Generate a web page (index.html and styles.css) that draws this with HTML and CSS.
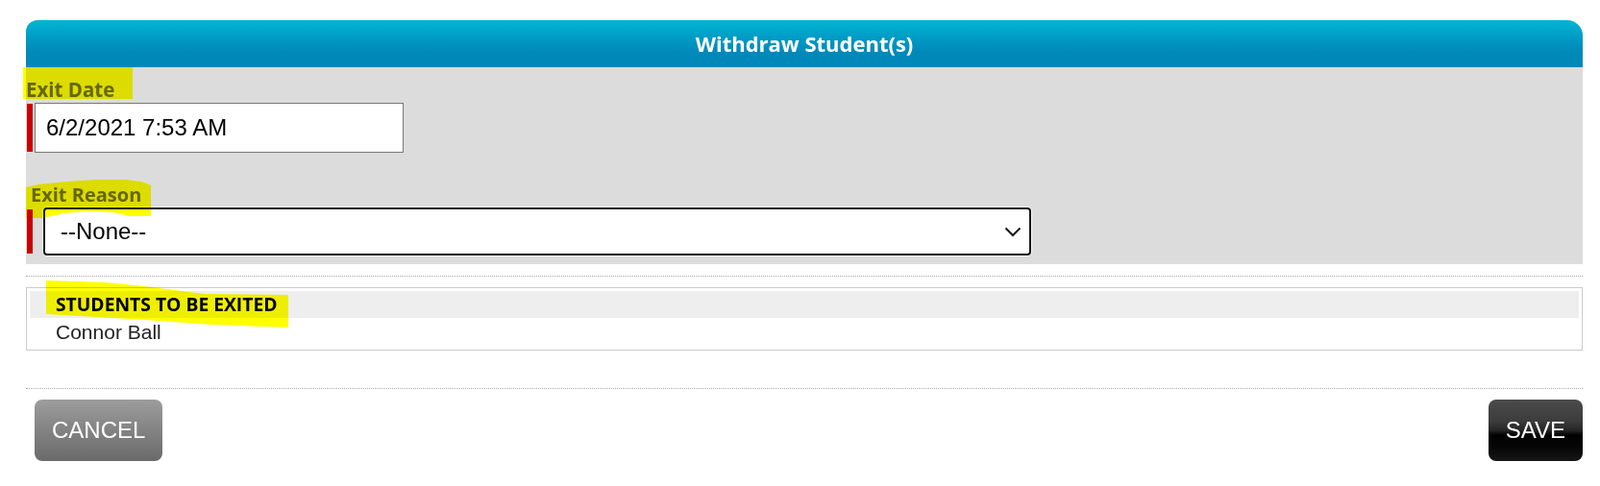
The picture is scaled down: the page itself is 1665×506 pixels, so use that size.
FILE: index.html
```html
<!DOCTYPE html>
<html lang="en">
<head>
<meta charset="utf-8">
<title>Withdraw Student(s)</title>
<link rel="stylesheet" href="styles.css">
</head>
<body>
<div class="page">
  <div class="panel">
    <div class="panel-header">Withdraw Student(s)</div>
    <div class="panel-body">
      <div class="field-label">Exit Date</div>
      <div class="field-row">
        <span class="req-bar"></span>
        <input class="text-input" type="text" value="6/2/2021 7:53 AM">
      </div>
      <div class="field-label field-label-reason">Exit Reason</div>
      <div class="field-row field-row-select">
        <span class="req-bar req-bar-select"></span>
        <div class="select-box">
          <span class="select-value">--None--</span>
          <svg class="chevron" width="18" height="11" viewBox="0 0 18 11" aria-hidden="true">
            <polyline points="1.5,1.5 9,9 16.5,1.5" fill="none" stroke="#1a1a1a" stroke-width="2"/>
          </svg>
        </div>
      </div>
    </div>
    <div class="divider"></div>
    <div class="students-box">
      <div class="students-head">STUDENTS TO BE EXITED</div>
      <div class="students-item">Connor Ball</div>
    </div>
    <div class="divider divider-bottom"></div>
    <div class="actions">
      <button class="btn btn-cancel" type="button">CANCEL</button>
      <button class="btn btn-save" type="button">SAVE</button>
    </div>
  </div>
  <div class="hl hl-date"></div>
  <div class="hl hl-reason"></div>
  <div class="hl hl-students"></div>
</div>
</body>
</html>
```

FILE: styles.css
```css
html, body {
  margin: 0;
  padding: 0;
  background: #ffffff;
}

.page {
  position: relative;
  padding: 21px 18px 0 27px;
  font-family: "Liberation Sans", Arial, sans-serif;
}

.panel {
  width: 1620px;
}

.panel-header {
  height: 49px;
  line-height: 49px;
  text-align: center;
  color: #ffffff;
  font-family: "Open Sans", "Noto Sans", sans-serif;
  font-weight: 700;
  font-size: 22px;
  border-radius: 12px 16px 0 0;
  background: linear-gradient(to bottom, #00b6d2 0%, #0099c4 40%, #0088b9 70%, #0088b9 100%);
}

.panel-body {
  background: #dcdcdc;
  padding: 10px 0 9px 0;
}

.field-label {
  height: 27px;
  line-height: 27px;
  font-family: "Open Sans", "Noto Sans", sans-serif;
  font-weight: 700;
  font-size: 20.5px;
  color: #666666;
  padding-left: 0;
}

.field-label-reason {
  margin-top: 31px;
  height: 26px;
  line-height: 26px;
  padding-left: 5px;
  font-size: 20px;
}

.field-row {
  display: flex;
  align-items: center;
  height: 52px;
}

.req-bar {
  display: block;
  width: 6px;
  height: 50px;
  margin-left: 1px;
  margin-right: 2px;
  background: #cc0000;
}

.text-input {
  box-sizing: border-box;
  width: 384px;
  height: 52px;
  margin: 0;
  padding: 0 11px;
  border: 1px solid #777777;
  border-radius: 0;
  background: #ffffff;
  font-family: "Liberation Sans", Arial, sans-serif;
  font-size: 24px;
  color: #000000;
  outline: none;
}

.field-row-select {
  height: 50px;
}

.req-bar-select {
  height: 46px;
  margin-right: 11px;
}

.select-box {
  box-sizing: border-box;
  width: 1028px;
  height: 50px;
  border: 2px solid #141414;
  border-radius: 4px;
  background: #ffffff;
  box-shadow: 0 0 0 1px rgba(255, 255, 255, 0.7);
  display: flex;
  align-items: center;
  justify-content: space-between;
  padding: 0 8px 0 16px;
  font-family: "Liberation Sans", Arial, sans-serif;
  font-size: 24px;
  color: #000000;
}

.chevron {
  display: block;
}

.divider {
  margin-top: 12px;
  border-top: 1px dotted #a8a8a8;
}

.students-box {
  margin-top: 11px;
  border: 1px solid #cccccc;
  padding: 3px;
}

.students-head {
  height: 28px;
  line-height: 28px;
  padding-left: 27px;
  background: #eeeeee;
  font-family: "Open Sans", "Noto Sans", sans-serif;
  font-weight: 700;
  font-size: 19.3px;
  color: #000000;
}

.students-item {
  height: 30px;
  line-height: 30px;
  padding-left: 27px;
  font-family: "Liberation Sans", Arial, sans-serif;
  font-size: 21px;
  color: #222222;
}

.divider-bottom {
  margin-top: 39px;
}

.actions {
  margin-top: 11px;
  padding-left: 9px;
  display: flex;
  justify-content: space-between;
  align-items: flex-start;
}

.btn {
  height: 64px;
  padding: 0 18px;
  border: none;
  border-radius: 8px;
  color: #ffffff;
  font-family: "Liberation Sans", Arial, sans-serif;
  font-size: 24px;
  cursor: pointer;
}

.btn-cancel {
  background: linear-gradient(to bottom, #9d9d9d 0%, #838383 50%, #6a6a6a 100%);
}

.btn-save {
  background: linear-gradient(to bottom, #4b4b4b 0%, #3c3c3c 35%, #262626 50%, #000000 58%, #080808 80%, #161616 100%);
}

/* Highlighter marks drawn over the form */
.hl {
  position: absolute;
  background: #ffff00;
  mix-blend-mode: multiply;
  pointer-events: none;
}

.hl-date {
  left: 24px;
  top: 70px;
  width: 114px;
  height: 33px;
}

.hl-reason {
  left: 27px;
  top: 186px;
  width: 131px;
  height: 42px;
  clip-path: polygon(0px 9px, 13px 6px, 43px 3px, 73px 1px, 103px 1px, 120px 3px, 130px 7px, 130px 39px, 108px 39px, 90px 35px, 63px 34px, 40px 36px, 18px 41px, 0px 41px);
}

.hl-students {
  left: 48px;
  top: 292px;
  width: 252px;
  height: 50px;
  clip-path: polygon(0px 0px, 62px 2px, 102px 6px, 165px 14px, 252px 15px, 252px 49px, 172px 46px, 102px 41px, 52px 38px, 0px 35px);
}
```
